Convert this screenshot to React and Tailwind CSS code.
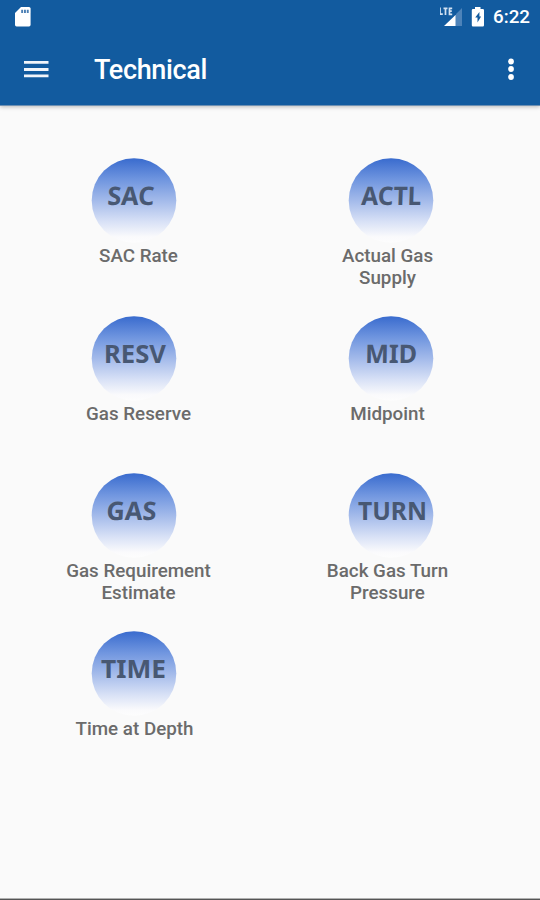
import React from 'react';

const items = [
  { code: 'SAC', label: ['SAC Rate'], x: 15, width: 47, slant: -3 },
  { code: 'ACTL', label: ['Actual Gas', 'Supply'], x: 12, width: 60, slant: -2 },
  { code: 'RESV', label: ['Gas Reserve'], x: 12, width: 62, slant: 0 },
  { code: 'MID', label: ['Midpoint'], x: 16, width: 52, slant: -1 },
  { code: 'GAS', label: ['Gas Requirement', 'Estimate'], x: 14, width: 50, slant: -3 },
  { code: 'TURN', label: ['Back Gas Turn', 'Pressure'], x: 9, width: 69, slant: 0 },
  { code: 'TIME', label: ['Time at Depth'], x: 9, width: 65, slant: 0, nudge: true },
];

function StatusBar() {
  return (
    <div className="flex h-[34px] items-center justify-between pr-[10px] pl-[14px]">
      <svg width="18" height="22" viewBox="0 0 18 22">
        <path d="M7 1h8a1.600 1.600 0 0 1 1.600 1.600v16.200a1.600 1.600 0 0 1-1.600 1.600H2.600A1.600 1.600 0 0 1 1 18.800V7z" fill="#fff" />
        <path d="M7.200 3.700h1.900v3.200H7.200zM10 3.700h1.900v3.200H10zM12.800 3.700h1.900v3.200h-1.900z" fill="#4b7fb4" />
      </svg>
      <div className="flex items-center">
        <svg width="25" height="22" viewBox="0 0 25 22">
          <path d="M22 2v18H5.500L15 10V9h1V8z" fill="#4d83b9" />
          <path d="M15.500 9v11H4z" fill="#fff" />
          <path d="M0 1.500v6.700h2.800M3.500 2.300h4M5.500 2.300v6.600M12.200 2.300H9.500v6h2.700M9.500 5.200h2.300" fill="none" stroke="#d3e2f2" strokeWidth="1.700" />
        </svg>
        <svg className="ml-[6px]" width="14" height="22" viewBox="0 0 14 22">
          <path d="M4 1h5.500v2h2.300a1.200 1.200 0 0 1 1.200 1.200v15a1.200 1.200 0 0 1-1.200 1.200H2a1.200 1.200 0 0 1-1.200-1.200v-15A1.200 1.200 0 0 1 2 3h2z" fill="#fff" />
          <path d="M8.400 6 4.200 11.600h2.300v4.800l3.600-6H8.400z" fill="#125b9f" />
        </svg>
        <span className="ml-[8px] text-[18.800px] leading-none font-medium">6:22</span>
      </div>
    </div>
  );
}

function Badge({ item, id }) {
  return (
    <svg width="86" height="86" viewBox="-1 0 86 86" className="block">
      <defs>
        <linearGradient id={id} x1="0" y1="0" x2="0" y2="1">
          <stop offset="0" stopColor="#396bce" />
          <stop offset="0.250" stopColor="#6f95df" />
          <stop offset="0.500" stopColor="#a3baea" />
          <stop offset="0.750" stopColor="#d8e1f6" />
          <stop offset="0.930" stopColor="#fafafc" />
          <stop offset="1" stopColor="#fdfdfd" />
        </linearGradient>
      </defs>
      <circle cx="42" cy="42.500" r="42.300" fill={`url(#${id})`} />
      <text
        x={item.x}
        y="0"
        transform={`translate(0 47) skewX(${item.slant})`}
        textLength={item.width}
        lengthAdjust="spacingAndGlyphs"
        strokeLinejoin="round"
        className="fill-[#485873] font-['Noto_Sans',sans-serif] text-[25.500px] font-bold"
      >
        {item.code}
      </text>
    </svg>
  );
}

export default function App() {
  return (
    <div className="flex h-[900px] w-[540px] flex-col overflow-hidden bg-[#fafafa] font-[Roboto,sans-serif]">
      <header className="h-[106px] shrink-0 border-b border-[#6f91b3] bg-[#125b9f] text-white shadow-[0_1px_4px_rgba(0,0,0,0.25)]">
        <StatusBar />
        <div className="flex h-[71px] items-center pr-[20px] pl-[24px]">
          <button type="button" aria-label="Menu">
            <svg width="25" height="20" viewBox="0 0 25 20" className="block">
              <path d="M0 2.300h24.500M0 9.500h24.500M0 15.900h24.500" stroke="#f1f5fa" strokeWidth="2.800" />
            </svg>
          </button>
          <h1 className="mt-[2px] ml-[45px] text-[27px] leading-none font-medium tracking-[-0.350px]">Technical</h1>
          <button type="button" aria-label="More options" className="ml-auto">
            <svg width="18" height="24" viewBox="0 0 18 24" className="block">
              <circle cx="9" cy="3.500" r="2.900" fill="#fff" />
              <circle cx="9" cy="11" r="2.900" fill="#fff" />
              <circle cx="9" cy="19" r="2.900" fill="#fff" />
            </svg>
          </button>
        </div>
      </header>

      <main className="grid grid-cols-[249px_249px] auto-rows-[157.600px] pt-[52px] pl-[14px]">
        {items.map((item, i) => (
          <div key={item.code} className="flex flex-col items-center">
            <div className={i % 2 === 0 ? 'mr-[9px]' : 'ml-[7px]'}>
              <Badge item={item} id={`badge-${i}`} />
            </div>
            <p
              className={`mt-[2px] text-center text-[18.800px] leading-[21.700px] font-medium text-[#6b6b6b] ${
                item.nudge ? 'mr-[8px]' : ''
              }`}
            >
              {item.label.map((line) => (
                <span key={line} className="block whitespace-nowrap">{line}</span>
              ))}
            </p>
          </div>
        ))}
      </main>

      <div className="mt-auto h-[2px] shrink-0 border-t border-[#b0b0b0] bg-[#555555]" />
    </div>
  );
}
